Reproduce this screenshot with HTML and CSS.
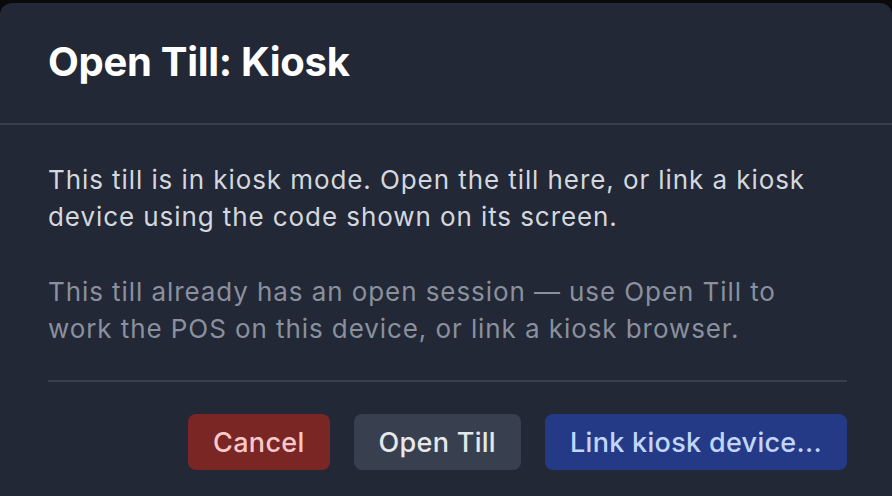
FILE: index.html
```html
<!DOCTYPE html>
<html lang="en">
<head>
<meta charset="utf-8">
<title>Open Till: Kiosk</title>
<link rel="stylesheet" href="styles.css">
</head>
<body>
  <div class="dialog">
    <header class="dialog-header">
      <h1 class="dialog-title">Open Till: Kiosk</h1>
    </header>
    <section class="dialog-body">
      <p class="lead">This till is in kiosk mode. Open the till here, or link a kiosk device using the code shown on its screen.</p>
      <p class="note">This till already has an open session — use Open Till to work the POS on this device, or link a kiosk browser.</p>
      <div class="actions">
        <button class="btn btn-cancel">Cancel</button>
        <button class="btn btn-open">Open Till</button>
        <button class="btn btn-link">Link kiosk device...</button>
      </div>
    </section>
  </div>
</body>
</html>
```
FILE: styles.css
```css
html, body {
  margin: 0;
  padding: 0;
  background: #0a0a0b;
  height: 100%;
  overflow: hidden;
}

body {
  padding-top: 3px;
  font-family: Inter, "Noto Sans", sans-serif;
}

.dialog {
  width: 892px;
  background: #222836;
  border-radius: 12px;
  padding-bottom: 40px;
}

.dialog-header {
  padding: 35px 48px 37px;
  border-bottom: 2px solid #393e4b;
}

.dialog-title {
  margin: 0;
  font-size: 40px;
  line-height: 48px;
  font-weight: 700;
  color: #ffffff;
  letter-spacing: -0.3px;
}

.dialog-body {
  padding: 36px 45px 0 48px;
}

.dialog-body p {
  margin: 0;
  padding-right: 10px;
  font-size: 26px;
  line-height: 37px;
  letter-spacing: 0.92px;
}

.lead {
  color: #d4d7dd;
}

.note {
  margin-top: 38px !important;
  color: #8a909d;
  padding-bottom: 33px;
  border-bottom: 2px solid #393e4b;
}

.actions {
  display: flex;
  justify-content: flex-end;
  gap: 24px;
  padding-top: 32px;
}

.btn {
  height: 56px;
  padding: 0 25px;
  border: none;
  border-radius: 8px;
  font-family: Inter, "Noto Sans", sans-serif;
  font-size: 27px;
  font-weight: 500;
  letter-spacing: 0.3px;
  cursor: pointer;
}

.btn-cancel {
  background: #7a2624;
  color: #f8c9c9;
}

.btn-open {
  background: #383f4e;
  color: #e6e8ec;
}

.btn-link {
  background: #253a86;
  color: #c0d6fb;
}
```
